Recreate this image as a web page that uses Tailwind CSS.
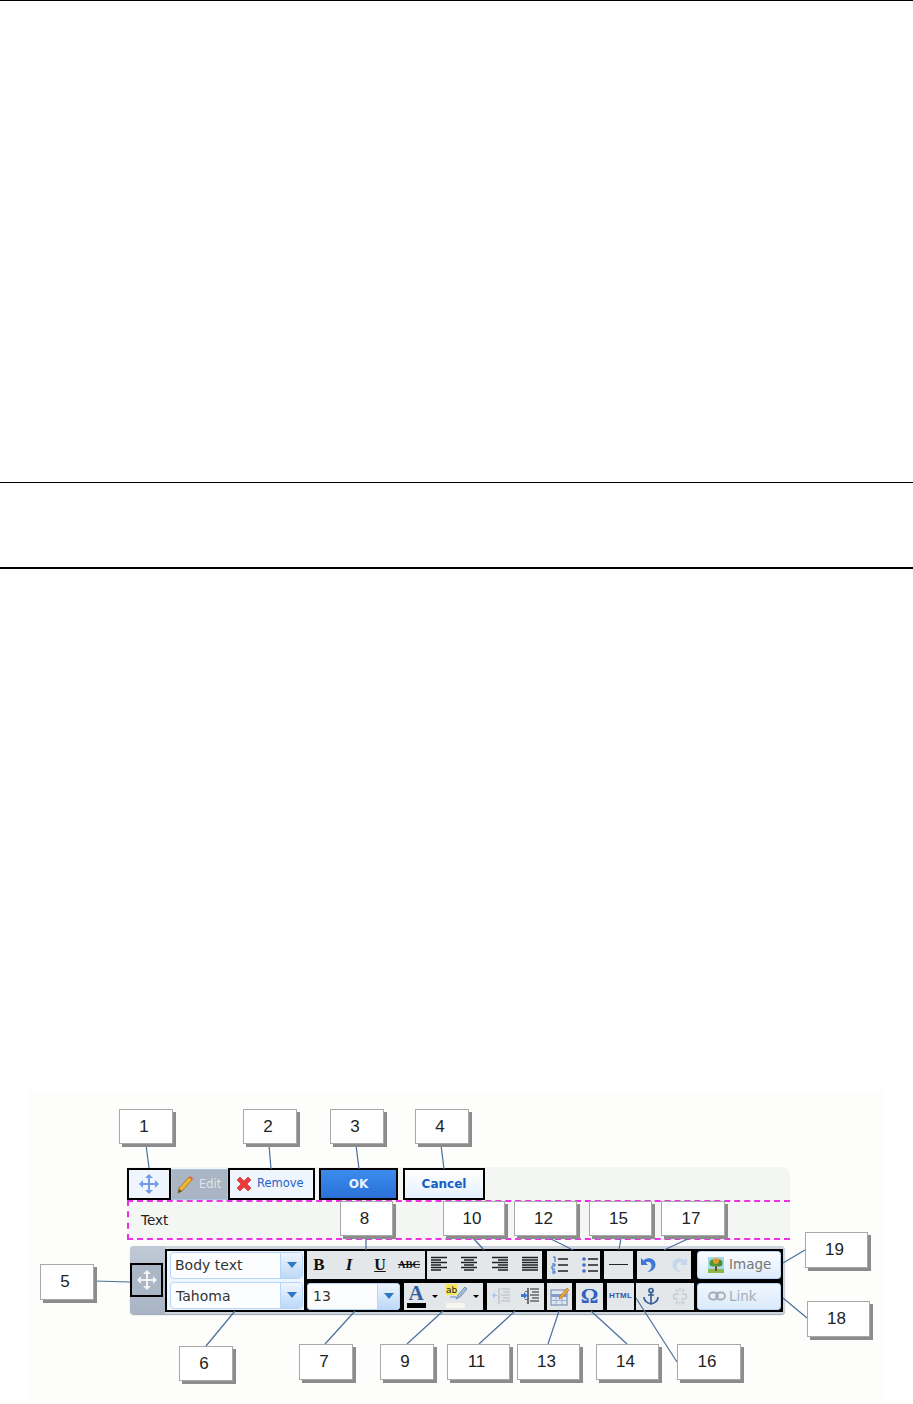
<!DOCTYPE html>
<html lang="en">
<head>
<meta charset="UTF-8">
<meta name="viewport" content="width=device-width, initial-scale=1.0">
<script src="https://cdn.jsdelivr.net/npm/@tailwindcss/browser@4"></script>
<title>Editor toolbar</title>
</head>
<body class="bg-white font-['DejaVu_Sans',sans-serif]">
<div class="h-[1404px] w-[913px] overflow-hidden">
  <div class="h-[1px] bg-black"></div>
  <div class="mt-[481px] h-[1px] bg-black"></div>
  <div class="mt-[84px] h-[2px] bg-black"></div>

  <!-- figure -->
  <div class="relative ml-[28px] mt-[521px] h-[314px] w-[857px] bg-[#fdfdfb] pl-[99px] pt-[77px]">
    <div class="w-[663px] rounded-tr-[8px] bg-[#f4f6f3]">
      <!-- top buttons -->
      <div class="flex h-[33px] items-end">
        <div class="flex h-[32px] w-[44px] items-center justify-center border-2 border-black bg-[#eef5fd]">
          <svg width="22" height="22" viewBox="0 0 22 22" fill="#6f9be8"><path d="M11 1l4 4h-3v5h5V7l4 4-4 4v-3h-5v5h3l-4 4-4-4h3v-5H5v3l-4-4 4-4v3h5V5H7z"/></svg>
        </div>
        <div class="flex h-[31px] w-[57px] items-center gap-[5px] border border-[#a8c8ea] bg-[#a9b5c2] pl-[5px] text-[11.500px] text-[#dfe5ea]">
          <svg width="17" height="19" viewBox="0 0 17 19"><path d="M1 18l1-5L12 2l3 3L5 16z" fill="#f0b530" stroke="#a06a20" stroke-width=".8"/><path d="M12 2l1.500-1 3 3-1.500 1z" fill="#e06a50"/><path d="M1 18l1-4 3 2z" fill="#553"/></svg>
          <span>Edit</span>
        </div>
        <div class="flex h-[32px] w-[87px] items-center gap-[5px] border-2 border-black bg-[#eef5fd] pl-[6px] text-[11.500px] text-[#1f62c8]">
          <svg width="16" height="16" viewBox="0 0 16 16"><path d="M1 4l3-3 4 4 4-4 3 3-4 4 4 4-3 3-4-4-4 4-3-3 4-4z" fill="#ec3a3a" stroke="#c92a2a" stroke-width=".6"/></svg>
          <span>Remove</span>
        </div>
        <div class="ml-[4px] flex h-[32px] w-[79px] items-center justify-center border-2 border-black bg-gradient-to-b from-[#3b8cec] to-[#2a70d8] text-[12px] font-bold text-[#eaf3ff]">OK</div>
        <div class="ml-[5px] flex h-[32px] w-[82px] items-center justify-center border-2 border-black bg-gradient-to-b from-[#ffffff] to-[#e4f0fd] text-[12px] font-bold text-[#1260c4]">Cancel</div>
      </div>
      <!-- text row -->
      <div class="flex h-[40px] items-center border-y-2 border-l-2 border-dashed border-[#ee30e6] pl-[12px] text-[13.500px] text-[#222]">Text</div>
    </div>

    <!-- toolbar -->
    <div class="ml-[3px] mt-[6px] flex h-[68px] w-[655px] items-center rounded-[4px] bg-[#cfd5dc] shadow-[0_1px_1px_#9aa5b2]">
      <div class="flex h-full w-[35px] items-center rounded-l-[4px] bg-gradient-to-b from-[#c0cad6] to-[#a8b4c4]">
        <div class="flex h-[34px] w-[33px] items-center justify-center border-2 border-black bg-[#aab6c4]">
          <svg width="22" height="22" viewBox="0 0 22 22" fill="#f2f5f8"><path d="M11 1l4 4h-3v5h5V7l4 4-4 4v-3h-5v5h3l-4 4-4-4h3v-5H5v3l-4-4 4-4v3h5V5H7z"/></svg>
        </div>
      </div>
      <div class="flex h-[63px] w-[618px] gap-[3px] bg-black p-[2px]">
        <!-- style and font selects -->
        <div class="flex h-full w-[137px] flex-col gap-[3px] bg-[#eef5fd] py-[1px] pl-[3px] pr-[1px]">
          <div class="flex h-[27px] items-stretch rounded-[4px] border border-[#b5d6f8] bg-[#fbfdff] text-[14px] text-[#333]">
            <span class="flex-1 self-center pl-[4px]">Body text</span>
            <span class="flex w-[22px] items-center justify-center rounded-r-[4px] border-l border-[#b5d6f8] bg-gradient-to-b from-[#eef5fd] to-[#bcd8f8]"><span class="h-0 w-0 border-x-[5px] border-t-[6px] border-x-transparent border-t-[#2f78c4]"></span></span>
          </div>
          <div class="flex h-[27px] items-stretch rounded-[4px] border border-[#b5d6f8] bg-[#fbfdff] text-[14px] text-[#333]">
            <span class="flex-1 self-center pl-[5px] pt-[2px]">Tahoma</span>
            <span class="flex w-[22px] items-center justify-center rounded-r-[4px] border-l border-[#b5d6f8] bg-gradient-to-b from-[#eef5fd] to-[#bcd8f8]"><span class="h-0 w-0 border-x-[5px] border-t-[6px] border-x-transparent border-t-[#2f78c4]"></span></span>
          </div>
        </div>
        <div class="flex w-[474px] flex-col gap-[4px]">
          <!-- row 1 -->
          <div class="flex h-[28px]">
            <div class="flex w-[118px] items-center bg-[#e3e7ea] font-['Liberation_Serif',serif] text-[#111]">
              <span class="w-[24px] text-center text-[17px] font-bold">B</span>
              <span class="w-[36px] text-center text-[17px] font-bold italic">I</span>
              <span class="w-[26px] text-center text-[16px] font-bold underline">U</span>
              <span class="w-[32px] text-center text-[10.500px] font-bold line-through">ABC</span>
            </div>
            <div class="ml-[2px] flex w-[115px] items-center justify-between bg-[#e3e7ea] px-[3px]">
              <svg width="18" height="17" viewBox="0 0 18 17" stroke="#222" stroke-width="1.300"><path d="M1 1.500h16M1 4h10M1 6.500h16M1 9h10M1 11.500h16M1 14h10"/></svg>
              <svg width="18" height="17" viewBox="0 0 18 17" stroke="#222" stroke-width="1.300"><path d="M1 1.500h16M4 4h10M1 6.500h16M4 9h10M1 11.500h16M4 14h10"/></svg>
              <svg width="18" height="17" viewBox="0 0 18 17" stroke="#222" stroke-width="1.300"><path d="M1 1.500h16M7 4h10M1 6.500h16M7 9h10M1 11.500h16M7 14h10"/></svg>
              <svg width="18" height="17" viewBox="0 0 18 17" stroke="#222" stroke-width="1.300"><path d="M1 1.500h16M1 4h16M1 6.500h16M1 9h16M1 11.500h16M1 14h16"/></svg>
            </div>
            <div class="ml-[5px] flex w-[53px] items-center gap-[12px] bg-[#e3e7ea] pl-[4px]">
              <svg width="18" height="18" viewBox="0 0 18 18"><path d="M7 3h10M7 9h10M7 15h10" stroke="#222" stroke-width="1.300"/><path d="M2 1h2v5M1 8h3v2H1v3h3M1 15h3v2H1" stroke="#2f62c0" stroke-width="1" fill="none"/></svg>
              <svg width="18" height="18" viewBox="0 0 18 18"><path d="M7 3h10M7 9h10M7 15h10" stroke="#222" stroke-width="1.300"/><circle cx="3" cy="3" r="1.800" fill="#3f6fc8"/><circle cx="3" cy="9" r="1.800" fill="#3f6fc8"/><circle cx="3" cy="15" r="1.800" fill="#3f6fc8"/></svg>
            </div>
            <div class="ml-[4px] flex w-[29px] items-center justify-center bg-[#e3e7ea]"><span class="h-[1px] w-[19px] bg-[#222]"></span></div>
            <div class="ml-[4px] flex w-[54px] items-center gap-[16px] bg-[#e3e7ea] pl-[3px]">
              <svg width="16" height="17" viewBox="0 0 16 17"><path d="M1 2v7h7L5.500 6.500C8 5 11.500 6 11.500 10c0 2.500-2 4.500-4 6 5-.5 8-3.500 8-7.500C15.500 2.500 8 0 3.500 4.500z" fill="#3b78d8"/></svg>
              <svg width="16" height="17" viewBox="0 0 16 17"><path d="M15 2v7H8l2.500-2.500C8 5 4.500 6 4.500 10c0 2.500 2 4.500 4 6-5-.5-8-3.500-8-7.500C.5 2.500 8 0 12.500 4.500z" fill="#c5d6ee"/></svg>
            </div>
            <div class="ml-[6px] flex w-[84px] items-center gap-[5px] rounded-[3px] border border-[#b5d6f8] bg-gradient-to-b from-[#fbfdff] to-[#dcebfb] pl-[10px] text-[13.500px] text-[#777]">
              <svg width="16" height="16" viewBox="0 0 16 16"><rect width="16" height="16" fill="#a8d8e8"/><path d="M0 12h16v4H0z" fill="#8ab84a"/><path d="M7 9h2v5H7z" fill="#7a4a20"/><circle cx="5" cy="6" r="3.500" fill="#4f9a30"/><circle cx="11" cy="6" r="3.500" fill="#4a8f2a"/><circle cx="8" cy="4" r="3" fill="#e09a30"/></svg>
              <span>Image</span>
            </div>
          </div>
          <!-- row 2 -->
          <div class="flex h-[27px]">
            <div class="flex w-[93px] items-stretch rounded-[3px] border border-[#b5d6f8] bg-[#fbfdff] text-[14px] text-[#333]">
              <span class="flex-1 self-center pl-[5px]">13</span>
              <span class="flex w-[22px] items-center justify-center rounded-r-[3px] border-l border-[#b5d6f8] bg-gradient-to-b from-[#eef5fd] to-[#bcd8f8]"><span class="h-0 w-0 border-x-[5px] border-t-[6px] border-x-transparent border-t-[#2f78c4]"></span></span>
            </div>
            <div class="ml-[4px] flex w-[79px] items-center bg-[#e3e7ea] pl-[2px]">
              <span class="flex h-[24px] w-[20px] flex-col items-center">
                <span class="h-[19px] font-['Liberation_Serif',serif] text-[21px] font-bold leading-[19px] text-[#34609e]">A</span>
                <span class="h-[5px] w-[19px] bg-black"></span>
              </span>
              <span class="ml-[6px] h-0 w-0 border-x-[3px] border-t-[3px] border-x-transparent border-t-black"></span>
              <span class="ml-[8px] flex h-[24px] w-[22px] flex-col">
                <svg width="22" height="19" viewBox="0 0 22 19"><rect width="11" height="11" fill="#f2e65a"/><text x="0" y="9" font-family="DejaVu Sans" font-size="9" fill="#222">ab</text><path d="M10 15l2-4 7-8 2 2-7 8z" fill="#a8bfdc" stroke="#5a7ca8" stroke-width=".8"/><path d="M4 13h6" stroke="#6a8ab0"/></svg>
                <span class="h-[5px] w-[19px] bg-[#f6f7ee]"></span>
              </span>
              <span class="ml-[5px] h-0 w-0 border-x-[3px] border-t-[3px] border-x-transparent border-t-black"></span>
            </div>
            <div class="ml-[4px] flex w-[57px] items-center justify-around bg-[#e3e7ea]">
              <svg width="20" height="18" viewBox="0 0 20 18" stroke="#b4bac0" stroke-width="1.200" fill="none"><path d="M10 2h9M12 5h7M10 8h9M12 11h7M10 14h9M8 1v16M2 8.500h4"/><path d="M1 8.500l3-3v6z" fill="#a8c4ea" stroke="none"/></svg>
              <svg width="20" height="18" viewBox="0 0 20 18" stroke="#222" stroke-width="1.200" fill="none"><path d="M10 2h9M12 5h7M10 8h9M12 11h7M10 14h9M8 1v16M6 4v1M6 12v1"/><path d="M1 7h3V5l3.500 3.500L4 12v-2H1z" fill="#3b78d8" stroke="none"/></svg>
            </div>
            <div class="ml-[3px] flex w-[25px] items-center justify-center bg-[#e3e7ea]">
              <svg width="20" height="19" viewBox="0 0 20 19"><rect x="1" y="3" width="16" height="15" fill="#dfe7f2" stroke="#6a84a8"/><path d="M1 7h16v3H1z" fill="#7f9cc8"/><path d="M1 13.500h16M6 7v11M12 7v11" stroke="#90a6c4" stroke-width=".8"/><path d="M9 12l1-3 7-8 2 2-7 8z" fill="#f0a830" stroke="#a06a20" stroke-width=".6"/></svg>
            </div>
            <div class="ml-[4px] flex w-[27px] items-center justify-center bg-[#e3e7ea] pb-[1px] font-['Liberation_Serif',serif] text-[22px] font-bold leading-none text-[#2f5fc0]">Ω</div>
            <div class="ml-[4px] flex w-[27px] items-center justify-center bg-[#e3e7ea] font-['Liberation_Sans',sans-serif] text-[8px] font-bold tracking-[0.2px] text-[#2f5aa8]">HTML</div>
            <div class="ml-[2px] flex w-[58px] items-center justify-around bg-[#e3e7ea]">
              <svg width="18" height="19" viewBox="0 0 18 19" fill="none" stroke="#3a5f98" stroke-width="1.700"><circle cx="9" cy="3.500" r="2"/><path d="M9 5.500V17M6 8h6M2 10c0 4 3 6 7 7 4-1 7-3 7-7"/></svg>
              <svg width="18" height="19" viewBox="0 0 18 19" fill="none" stroke="#c6ccd6" stroke-width="1.500"><path d="M8 7H5a2.500 2.500 0 0 0 0 5h2M10 12h3a2.500 2.500 0 0 0 0-5h-2M5 2l2 3M13 2l-2 3M5 17l2-3M13 17l-2-3M9 1v3M9 15v3"/></svg>
            </div>
            <div class="ml-[3px] flex w-[84px] items-center gap-[3px] rounded-[3px] border border-[#b5d6f8] bg-gradient-to-b from-[#f0f6fd] to-[#dcebfb] pl-[10px] text-[13.500px] text-[#a5acb5]">
              <svg width="18" height="10" viewBox="0 0 18 10" fill="none" stroke="#a5acb5" stroke-width="1.800"><rect x="1" y="1.500" width="9" height="7" rx="3.500"/><rect x="8" y="1.500" width="9" height="7" rx="3.500"/></svg>
              <span>Link</span>
            </div>
          </div>
        </div>
      </div>
    </div>

    <!-- leader lines, in page coordinates -->
    <svg class="absolute left-0 top-0 h-[314px] w-[857px]" viewBox="28 1090 857 314" fill="none" stroke="#4a6f9a" stroke-width="1.200">
      <path d="M146 1145L149 1168M269 1145L271 1169M356 1145L359 1169M441 1145L444 1169"/>
      <path d="M366 1235V1250M473 1238L484 1250M547 1237L573 1250M621 1238L619 1250M692 1237L664 1250"/>
      <path d="M805 1250L783 1263M807 1318L783 1298M94 1281L130 1282"/>
      <path d="M206 1346L235 1311M325 1344L355 1311M407 1344L443 1311M479 1344L515 1311M548 1344L559 1311M627 1344L591 1311M677 1362L636 1298"/>
    </svg>

    <!-- callouts -->
    <div class="absolute left-[91px] top-[19px] flex h-[35px] w-[54px] items-center justify-center border border-[#a8a8a8] bg-white pr-[4px] font-['Liberation_Sans',sans-serif] text-[17px] text-[#222] shadow-[3px_3px_0_#8c8c8c]">1</div>
    <div class="absolute left-[215px] top-[19px] flex h-[35px] w-[54px] items-center justify-center border border-[#a8a8a8] bg-white pr-[4px] font-['Liberation_Sans',sans-serif] text-[17px] text-[#222] shadow-[3px_3px_0_#8c8c8c]">2</div>
    <div class="absolute left-[302px] top-[19px] flex h-[35px] w-[54px] items-center justify-center border border-[#a8a8a8] bg-white pr-[4px] font-['Liberation_Sans',sans-serif] text-[17px] text-[#222] shadow-[3px_3px_0_#8c8c8c]">3</div>
    <div class="absolute left-[387px] top-[19px] flex h-[35px] w-[54px] items-center justify-center border border-[#a8a8a8] bg-white pr-[4px] font-['Liberation_Sans',sans-serif] text-[17px] text-[#222] shadow-[3px_3px_0_#8c8c8c]">4</div>
    <div class="absolute left-[312px] top-[111px] flex h-[35px] w-[53px] items-center justify-center border border-[#a8a8a8] bg-white pr-[4px] font-['Liberation_Sans',sans-serif] text-[17px] text-[#222] shadow-[3px_3px_0_#8c8c8c]">8</div>
    <div class="absolute left-[415px] top-[111px] flex h-[35px] w-[62px] items-center justify-center border border-[#a8a8a8] bg-white pr-[4px] font-['Liberation_Sans',sans-serif] text-[17px] text-[#222] shadow-[3px_3px_0_#8c8c8c]">10</div>
    <div class="absolute left-[486px] top-[111px] flex h-[35px] w-[63px] items-center justify-center border border-[#a8a8a8] bg-white pr-[4px] font-['Liberation_Sans',sans-serif] text-[17px] text-[#222] shadow-[3px_3px_0_#8c8c8c]">12</div>
    <div class="absolute left-[561px] top-[111px] flex h-[35px] w-[63px] items-center justify-center border border-[#a8a8a8] bg-white pr-[4px] font-['Liberation_Sans',sans-serif] text-[17px] text-[#222] shadow-[3px_3px_0_#8c8c8c]">15</div>
    <div class="absolute left-[633px] top-[111px] flex h-[35px] w-[64px] items-center justify-center border border-[#a8a8a8] bg-white pr-[4px] font-['Liberation_Sans',sans-serif] text-[17px] text-[#222] shadow-[3px_3px_0_#8c8c8c]">17</div>
    <div class="absolute left-[777px] top-[142px] flex h-[36px] w-[63px] items-center justify-center border border-[#a8a8a8] bg-white pr-[4px] font-['Liberation_Sans',sans-serif] text-[17px] text-[#222] shadow-[3px_3px_0_#8c8c8c]">19</div>
    <div class="absolute left-[779px] top-[211px] flex h-[36px] w-[63px] items-center justify-center border border-[#a8a8a8] bg-white pr-[4px] font-['Liberation_Sans',sans-serif] text-[17px] text-[#222] shadow-[3px_3px_0_#8c8c8c]">18</div>
    <div class="absolute left-[12px] top-[174px] flex h-[36px] w-[54px] items-center justify-center border border-[#a8a8a8] bg-white pr-[4px] font-['Liberation_Sans',sans-serif] text-[17px] text-[#222] shadow-[3px_3px_0_#8c8c8c]">5</div>
    <div class="absolute left-[151px] top-[256px] flex h-[35px] w-[54px] items-center justify-center border border-[#a8a8a8] bg-white pr-[4px] font-['Liberation_Sans',sans-serif] text-[17px] text-[#222] shadow-[3px_3px_0_#8c8c8c]">6</div>
    <div class="absolute left-[271px] top-[254px] flex h-[36px] w-[54px] items-center justify-center border border-[#a8a8a8] bg-white pr-[4px] font-['Liberation_Sans',sans-serif] text-[17px] text-[#222] shadow-[3px_3px_0_#8c8c8c]">7</div>
    <div class="absolute left-[352px] top-[254px] flex h-[36px] w-[54px] items-center justify-center border border-[#a8a8a8] bg-white pr-[4px] font-['Liberation_Sans',sans-serif] text-[17px] text-[#222] shadow-[3px_3px_0_#8c8c8c]">9</div>
    <div class="absolute left-[419px] top-[254px] flex h-[36px] w-[63px] items-center justify-center border border-[#a8a8a8] bg-white pr-[4px] font-['Liberation_Sans',sans-serif] text-[17px] text-[#222] shadow-[3px_3px_0_#8c8c8c]">11</div>
    <div class="absolute left-[489px] top-[254px] flex h-[36px] w-[63px] items-center justify-center border border-[#a8a8a8] bg-white pr-[4px] font-['Liberation_Sans',sans-serif] text-[17px] text-[#222] shadow-[3px_3px_0_#8c8c8c]">13</div>
    <div class="absolute left-[568px] top-[254px] flex h-[36px] w-[63px] items-center justify-center border border-[#a8a8a8] bg-white pr-[4px] font-['Liberation_Sans',sans-serif] text-[17px] text-[#222] shadow-[3px_3px_0_#8c8c8c]">14</div>
    <div class="absolute left-[649px] top-[254px] flex h-[36px] w-[64px] items-center justify-center border border-[#a8a8a8] bg-white pr-[4px] font-['Liberation_Sans',sans-serif] text-[17px] text-[#222] shadow-[3px_3px_0_#8c8c8c]">16</div>
  </div>
</div>
</body>
</html>
